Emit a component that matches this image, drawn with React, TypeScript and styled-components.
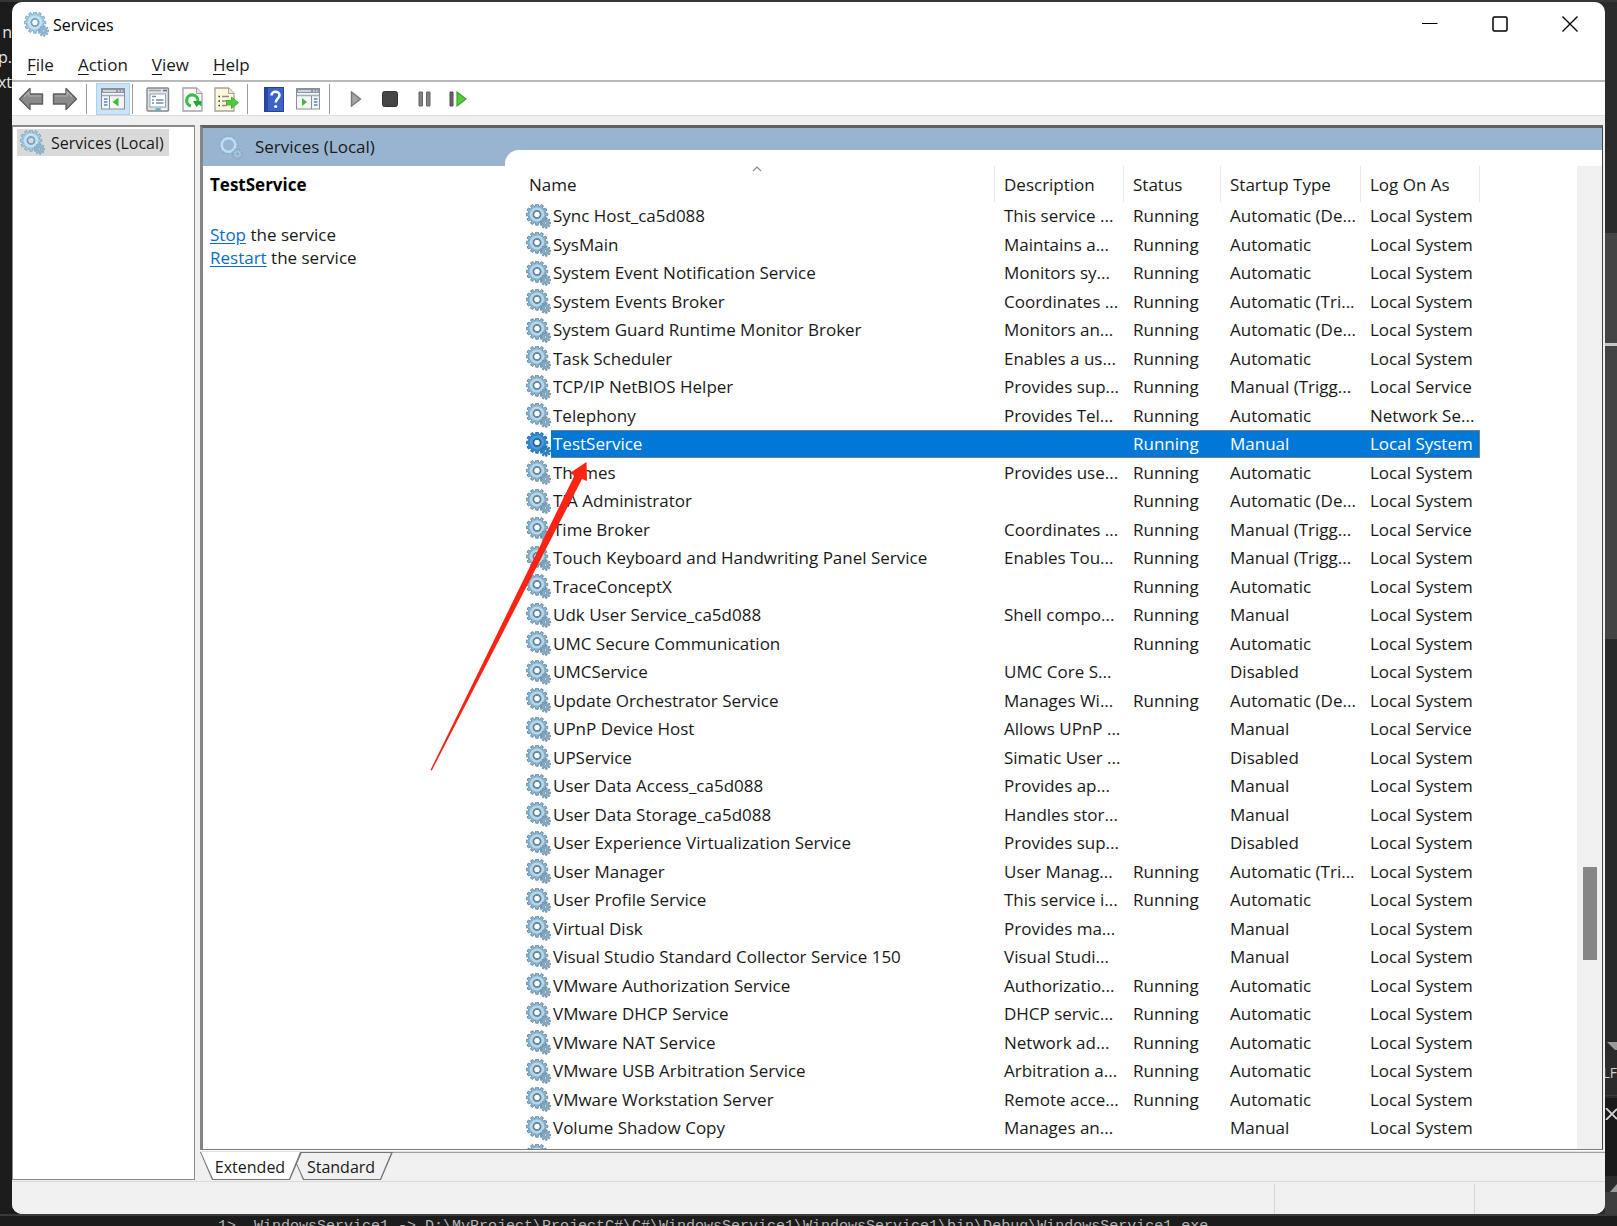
import React from "react";
import styled, { createGlobalStyle, css } from "styled-components";

const GlobalStyle = createGlobalStyle`
  *, *::before, *::after { box-sizing: border-box; }
  body {
    margin: 0;
    overflow: hidden;
    font-family: "Open Sans", "Noto Sans", sans-serif;
    font-size: 17px;
    line-height: 22px;
    color: #191919;
  }
  button { font: inherit; color: inherit; border: 0; padding: 0; margin: 0; background: none; }
`;

/* ---------- desktop behind the window ---------- */

const Desktop = styled.div`
  display: grid;
  grid-template: 2px minmax(0, 1fr) 12px / 12px minmax(0, 1fr) 12px;
  height: 100vh;
  background: linear-gradient(90deg, #1c1c1c 50%, #2b2b2b 50%);
`;

const TopEdge = styled.div`
  grid-column: 1 / -1;
  background: #363636;
`;

const LeftEdge = styled.div`
  display: flex;
  flex-direction: column;
  align-items: flex-end;
  padding-top: 18px;
  overflow: hidden;
  background: #1c1c1c;
  color: #e4e4e4;
  font-size: 16px;
  line-height: 25px;
  white-space: nowrap;
`;

const RightEdge = styled.div`
  display: flex;
  flex-direction: column;
  overflow: hidden;
  background: #2b2b2b;
  color: #d0d0d0;
`;

const EdgeBlock = styled.div<{ $h?: number; $bg: string }>`
  display: flex;
  align-items: flex-end;
  justify-content: center;
  ${(p) => (p.$h ? `flex: 0 0 ${p.$h}px;` : "flex: 1;")}
  background: ${(p) => p.$bg};
`;

const EdgeLabel = styled(EdgeBlock)`
  align-items: center;
  justify-content: flex-end;
  border-bottom: 1px solid #3c3c3c;
  font-size: 14px;
`;

const Console = styled.div`
  grid-column: 1 / -1;
  padding: 2px 0 0 218px;
  overflow: hidden;
  background: #1c1c1c;
  border-top: 2px solid #3a3a3a;
  color: #b4b4b4;
  font: 15px/18px "Liberation Mono", monospace;
  white-space: pre;
`;

/* ---------- window ---------- */

const Window = styled.main`
  position: relative;
  display: flex;
  flex-direction: column;
  overflow: hidden;
  border-radius: 10px;
  background: #fff;
`;

const TitleBar = styled.header`
  display: flex;
  align-items: center;
  height: 44px;
  flex: none;
  padding-left: 12px;
`;

const Title = styled.h1`
  flex: 1;
  margin: 0 0 0 4px;
  padding-top: 1px;
  font-size: 16px;
  font-weight: 400;
  color: #000;
`;

const CaptionButton = styled.button`
  display: grid;
  place-items: center;
  width: 70px;
  height: 100%;
`;

const MenuBar = styled.nav`
  display: flex;
  flex: none;
  height: 36px;
  padding: 4px 3px 0;
  border-bottom: 2px solid #b9b9b9;
`;

const MenuItem = styled.button`
  padding: 0 12px;

  &::first-letter { text-decoration: underline; text-underline-offset: 3px; }
`;

const Toolbar = styled.div`
  display: flex;
  align-items: center;
  flex: none;
  height: 34px;
  padding: 1px 0 0 2px;
  border-bottom: 1px solid #dcdcdc;
`;

const ToolButton = styled.button<{ $active?: boolean }>`
  display: grid;
  place-items: center;
  width: 34px;
  height: 32px;
  ${(p) =>
    p.$active &&
    css`
      background: #cce4f9;
      box-shadow: inset 0 0 0 1px #a9d1f3;
    `}
`;

const Separator = styled.i<{ $tight?: boolean }>`
  width: 1px;
  height: 30px;
  margin: 0 ${(p) => (p.$tight ? 8 : 9)}px 0 ${(p) => (p.$tight ? 2 : 4)}px;
  background: #9c9c9c;
`;

const Body = styled.div`
  display: flex;
  flex: 1;
  min-height: 0;
  gap: 5px;
  padding: 9px 0 1px;
  background: #f0f0f0;
`;

const TreePane = styled.aside`
  flex: 0 0 183px;
  padding: 2px 4px;
  border: solid #8a8a8a;
  border-width: 2px 1px 1px;
  background: #fff;
`;

const TreeItem = styled.button`
  display: flex;
  align-items: center;
  gap: 6px;
  height: 27px;
  padding: 0 5px 0 3px;
  background: #d9d9d9;
  font-size: 16px;
`;

const MainColumn = styled.div`
  display: flex;
  flex: 1;
  flex-direction: column;
  min-width: 0;
`;

const Pane = styled.section`
  display: flex;
  flex: 1;
  min-height: 0;
  margin-right: 2px;
  border: solid;
  border-width: 3px 1px 1px 3px;
  border-color: #606060 #444 #7c7c7c #858585;
  background: #fff;
`;

const Details = styled.div`
  flex: 0 0 302px;
`;

const Banner = styled.div`
  display: flex;
  align-items: center;
  gap: 12px;
  height: 38px;
  padding-left: 15px;
  background: #99b4d1;
`;

const DetailsBody = styled.div`
  padding: 8px 7px;

  h2 { margin: 0 0 27px; font-size: 17px; line-height: 22px; color: #000; }
  p { margin: 0; line-height: 23px; }
  a { color: #0a6cc8; text-underline-offset: 2px; }
`;

const ListBackdrop = styled.div`
  display: flex;
  flex: 1;
  min-width: 0;
  padding-top: 22px;
  background: linear-gradient(#99b4d1 38px, #fff 38px);
`;

const ListCard = styled.div`
  display: flex;
  flex: 1;
  min-width: 0;
  padding: 16px 0 0 15px;
  border-top-left-radius: 14px;
  background: #fff;
`;

const ListView = styled.div`
  flex: 1;
  min-width: 0;
  overflow: hidden;
`;

const Table = styled.table`
  width: 960px;
  table-layout: fixed;
  border-spacing: 0;
  border-collapse: separate;
`;

const Th = styled.th<{ $w: number }>`
  position: relative;
  width: ${(p) => p.$w}px;
  height: 36px;
  padding: 1px 0 0 9px;
  border-right: 1px solid #e8e8e8;
  font-weight: 400;
  text-align: left;
  white-space: nowrap;

  svg { position: absolute; top: 0; left: 50%; margin-left: -5px; }
`;

const Row = styled.tr<{ $selected: boolean }>`
  height: 29px;
  &:nth-child(odd) { height: 28px; }
  ${(p) =>
    p.$selected &&
    css`
      color: #fff;
      td:not(:first-child), td:first-child span {
        background: #0078d7;
        box-shadow: inset 0 1px #7c7f80, inset 0 -1px #7c7f80;
      }
      td:last-child { border-right: 1px solid #7c7f80; }
    `}
`;

const Td = styled.td`
  height: inherit;
  padding: 0 0 0 9px;
  overflow: hidden;
  white-space: nowrap;
`;

const NameTd = styled(Td)`
  padding: 0 0 0 6px;
`;

const NameCell = styled.div`
  display: flex;
  align-items: center;
  height: 28px;

  svg { flex: none; }
  span { flex: 1; padding-left: 2px; line-height: 28px; }
`;

const ScrollTrack = styled.div`
  flex: 0 0 25px;
  display: flex;
  flex-direction: column;
  align-items: center;
  background: #f0f0f0;
`;

const ScrollSpace = styled.div<{ $grow: number }>`
  flex: ${(p) => p.$grow} 0 0;
`;

const ScrollThumb = styled.div`
  flex: 93 0 0;
  width: 14px;
  background: #868686;
`;

const TabStrip = styled.div`
  display: flex;
  flex: none;
  height: 30px;
  border-top: 1px solid #fff;
  box-shadow: inset 0 1px #e0e0e0, inset 0 2px #a0a0a0;
`;

const Tab = styled.button<{ $active?: boolean }>`
  position: relative;
  z-index: ${(p) => (p.$active ? 2 : 1)};
  width: 102px;
  height: 28px;
  margin: 1px -11px 0 0;
  padding: 2px 2px 0 0;
  background: #757575;
  font-size: 16px;
  clip-path: polygon(0 0, 100% 0, calc(100% - 12px) 100%, 12px 100%);

  &::before {
    content: "";
    position: absolute;
    inset: 0;
    z-index: -1;
    background: ${(p) => (p.$active ? "#fff" : "#f0f0f0")};
    clip-path: polygon(
      1px ${(p) => (p.$active ? 0 : 1)}px,
      calc(100% - 2px) ${(p) => (p.$active ? 0 : 1)}px,
      calc(100% - 13px) calc(100% - 1px),
      13px calc(100% - 1px)
    );
  }
`;

const StatusBar = styled.footer`
  display: flex;
  flex: none;
  justify-content: flex-end;
  height: 33px;
  padding: 2px 3px 0 0;
  border-top: 1px solid #dadada;
  background: #f0f0f0;
`;

const StatusCell = styled.div<{ $w: number }>`
  width: ${(p) => p.$w}px;
  border-left: 1px solid #d8d8d8;
`;

const Pointer = styled.svg`
  position: absolute;
  left: 418px;
  top: 459px;
  pointer-events: none;
`;

/* ---------- drawings ---------- */

function gearPath(cx: number, cy: number, outer: number, inner: number, hole: number, teeth: number) {
  const pts: string[] = [];
  const step = (Math.PI * 2) / teeth;
  for (let i = 0; i < teeth; i++) {
    const a = i * step;
    [
      [inner, -0.3],
      [outer, -0.22],
      [outer, 0.22],
      [inner, 0.3],
    ].forEach(([r, k]) => {
      pts.push(`${(cx + r * Math.cos(a + k * step)).toFixed(2)} ${(cy + r * Math.sin(a + k * step)).toFixed(2)}`);
    });
  }
  return `M${pts.join("L")}ZM${cx - hole} ${cy}a${hole} ${hole} 0 1 0 ${hole * 2} 0a${hole} ${hole} 0 1 0 ${-hole * 2} 0Z`;
}

const BIG_GEAR = gearPath(11, 10.5, 10.8, 8.6, 3.2, 12);
const SMALL_GEAR = gearPath(19.5, 19, 5.4, 3.6, 1.1, 9);

const palettes = {
  normal: { edge: "#64869e", fill: "#8db6d1", ring: "#b5d8ec", inner: "#5b7b91", small: "#86abc4" },
  selected: { edge: "#1c6cb0", fill: "#2f87cd", ring: "#4c9bd8", inner: "#1a5d9c", small: "#2f7fc0" },
  light: { edge: "#7ba6c2", fill: "#a3cbe3", ring: "#c4e3f3", inner: "#7298b1", small: "#92b8d0" },
};

function Gears({ tone = "normal" }: { tone?: keyof typeof palettes }) {
  const c = palettes[tone];
  return (
    <svg width="25" height="25" viewBox="0 0 25 25" aria-hidden="true">
      <path d={BIG_GEAR} fill={c.fill} stroke={c.edge} strokeWidth="0.9" fillRule="evenodd" />
      <circle cx="11" cy="10.5" r="5.900" fill="none" stroke={c.ring} strokeWidth="2.400" />
      <circle cx="11" cy="10.5" r="3.700" fill="none" stroke={c.inner} strokeWidth="1.100" />
      <path d={SMALL_GEAR} fill={c.small} stroke={c.edge} strokeWidth="0.700" fillRule="evenodd" />
    </svg>
  );
}

function BannerGears() {
  return (
    <svg width="25" height="25" viewBox="0 0 25 25" aria-hidden="true">
      <circle cx="10.5" cy="10" r="9" fill="none" stroke="#8caccb" strokeWidth="2" strokeDasharray="2 2.7" />
      <circle cx="10.5" cy="10" r="6.8" fill="none" stroke="#b9dff0" strokeWidth="2.6" />
      <path d={SMALL_GEAR} fill="#a5c8de" stroke="#7c9fbe" strokeWidth="0.6" fillRule="evenodd" />
    </svg>
  );
}

function Arrow({ flip }: { flip?: boolean }) {
  return (
    <svg width="26" height="24" viewBox="0 0 26 24">
      <path
        d="M1.5 12 12 1.5V7H24.5V17H12V22.5Z"
        transform={flip ? "translate(26 0) scale(-1 1)" : undefined}
        fill="#8a8a8a"
        stroke="#5e5e5e"
        strokeWidth="1.4"
        strokeLinejoin="round"
      />
      <path d={flip ? "M3 9H15V5L20 10" : "M23 9H11V5L6 10"} fill="none" stroke="#b0b0b0" strokeWidth="1.2" />
    </svg>
  );
}

function ConsoleIcon({ mirrored }: { mirrored?: boolean }) {
  return (
    <svg width="24" height="22" viewBox="0 0 24 22">
      <rect x="0.5" y="0.5" width="23" height="20.5" fill="#f4f6f8" stroke="#8b8f94" />
      <rect x="1" y="1" width="22" height="4" fill="#8996a3" />
      <path d="M2 3H15M17 3H18.5M20 3H21.5" stroke="#e3e9ef" strokeWidth="1.4" />
      <path d="M1 7.5H23" stroke="#a6adb5" strokeWidth="1.4" />
      {mirrored ? (
        <>
          <path d="M15.5 8V21" stroke="#8b8f94" />
          <path d="M18 11H21.5M18 14H21.5M18 17H21.5" stroke="#4f87c4" strokeWidth="1.6" />
          <path d="M6 10V18L11 14Z" fill="#46b83a" />
        </>
      ) : (
        <>
          <path d="M8.5 8V21" stroke="#8b8f94" />
          <path d="M3 11H6.5M3 14H6.5M3 17H6.5" stroke="#4f87c4" strokeWidth="1.6" />
          <path d="M17.500 9.500V18.500L11.500 14Z" fill="#46b83a" />
        </>
      )}
    </svg>
  );
}

function PropertiesIcon() {
  return (
    <svg width="24" height="25" viewBox="0 0 24 25">
      <rect x="1" y="1" width="21.500" height="23" rx="1" fill="#dfe1e3" stroke="#84888c" strokeWidth="1.4" />
      <path d="M3 3.500H15" stroke="#9ba0a5" strokeWidth="1.4" />
      <path d="M17 3.500H21" stroke="#6a6e72" strokeWidth="1.6" />
      <rect x="4" y="7" width="15.500" height="13" fill="#fff" stroke="#8fa3b8" />
      <path d="M6 9.500H10M6 13H8M10 13H17.500M6 16H8M10 16H17.500" stroke="#6d8fb3" strokeWidth="1.3" />
      <rect x="9.500" y="21.300" width="5" height="1.800" fill="#3fb1e6" />
      <rect x="16" y="21.300" width="4.500" height="1.800" fill="#fff" />
    </svg>
  );
}

function PageShape({ tint }: { tint: string }) {
  return <path d="M1 1H14.500L20 6.500V24H1Z" fill={tint} stroke="#a3a3a3" strokeWidth="1.300" />;
}

function RefreshIcon() {
  return (
    <svg width="21" height="25" viewBox="0 0 21 25">
      <PageShape tint="#fafafa" />
      <path d="M14.500 1V6.500H20" fill="#e4e4e4" stroke="#a3a3a3" />
      <path d="M9 19A5.600 5.600 0 1 1 15.800 14" fill="none" stroke="#3cbd45" strokeWidth="3.200" />
      <path d="M11 14H19.500V19.500L17 17.500L14.500 20Z" fill="#27a636" />
    </svg>
  );
}

function ExportIcon() {
  return (
    <svg width="25" height="25" viewBox="0 0 25 25">
      <PageShape tint="#fbf8dc" />
      <path d="M14.500 1V6.500H20" fill="#efeacb" stroke="#a3a3a3" />
      <path d="M4.500 9.500H6M4.500 14H6M4.500 18.500H6" stroke="#333" strokeWidth="1.600" />
      <path d="M8 9.500H15M8 14H13M8 18.500H13" stroke="#8f8d7c" strokeWidth="1.400" />
      <path d="M12.500 13.500H17.500V10L24.500 15.800L17.500 21.500V18H12.500Z" fill="#4ccb38" stroke="#38ab2b" strokeWidth="0.800" />
    </svg>
  );
}

function HelpIcon() {
  return (
    <svg width="20" height="25" viewBox="0 0 20 25">
      <rect x="0.500" y="0.500" width="19" height="24" fill="#3c63c9" stroke="#2c3f93" />
      <path d="M1 1H4V24H1Z" fill="#2a46a4" />
      <path d="M7.500 8.500C7.500 3.500 15.500 3.500 15.500 8.300C15.500 11.500 11.700 11.800 11.700 15.500" fill="none" stroke="#fff" strokeWidth="2.500" />
      <circle cx="11.700" cy="19.500" r="1.600" fill="#fff" />
    </svg>
  );
}

function PlayIcon() {
  return (
    <svg width="12" height="16" viewBox="0 0 12 16">
      <path d="M1.500 1V15L10.500 8Z" fill="#a5a5a5" stroke="#777" strokeWidth="1.400" />
    </svg>
  );
}

function StopIcon() {
  return (
    <svg width="16" height="16" viewBox="0 0 16 16">
      <rect x="0.500" y="0.500" width="15" height="15" rx="2" fill="#454545" stroke="#333" />
    </svg>
  );
}

function PauseIcon() {
  return (
    <svg width="13" height="16" viewBox="0 0 13 16">
      <path d="M1 1H4.500V15H1ZM8.500 1H12V15H8.500Z" fill="#818181" stroke="#656565" />
    </svg>
  );
}

function RestartIcon() {
  return (
    <svg width="18" height="16" viewBox="0 0 18 16">
      <path d="M1 1H4V15H1Z" fill="#666" stroke="#4c4c4c" />
      <path d="M8 1V15L17 8Z" fill="#55c83e" stroke="#37a52a" strokeWidth="1.200" />
    </svg>
  );
}

/* ---------- data ---------- */

type Service = [name: string, description: string, status: string, startup: string, logOn: string];

const R = "Running";
const A = "Automatic";
const M = "Manual";
const D = "Disabled";
const DE = "Automatic (De...";
const TRI = "Automatic (Tri...";
const TRIG = "Manual (Trigg...";
const SYS = "Local System";
const SVC = "Local Service";

const services: Service[] = [
  ["Sync Host_ca5d088", "This service ...", R, DE, SYS],
  ["SysMain", "Maintains a...", R, A, SYS],
  ["System Event Notification Service", "Monitors sy...", R, A, SYS],
  ["System Events Broker", "Coordinates ...", R, TRI, SYS],
  ["System Guard Runtime Monitor Broker", "Monitors an...", R, DE, SYS],
  ["Task Scheduler", "Enables a us...", R, A, SYS],
  ["TCP/IP NetBIOS Helper", "Provides sup...", R, TRIG, SVC],
  ["Telephony", "Provides Tel...", R, A, "Network Se..."],
  ["TestService", "", R, M, SYS],
  ["Themes", "Provides use...", R, A, SYS],
  ["TIA Administrator", "", R, DE, SYS],
  ["Time Broker", "Coordinates ...", R, TRIG, SVC],
  ["Touch Keyboard and Handwriting Panel Service", "Enables Tou...", R, TRIG, SYS],
  ["TraceConceptX", "", R, A, SYS],
  ["Udk User Service_ca5d088", "Shell compo...", R, M, SYS],
  ["UMC Secure Communication", "", R, A, SYS],
  ["UMCService", "UMC Core S...", "", D, SYS],
  ["Update Orchestrator Service", "Manages Wi...", R, DE, SYS],
  ["UPnP Device Host", "Allows UPnP ...", "", M, SVC],
  ["UPService", "Simatic User ...", "", D, SYS],
  ["User Data Access_ca5d088", "Provides ap...", "", M, SYS],
  ["User Data Storage_ca5d088", "Handles stor...", "", M, SYS],
  ["User Experience Virtualization Service", "Provides sup...", "", D, SYS],
  ["User Manager", "User Manag...", R, TRI, SYS],
  ["User Profile Service", "This service i...", R, A, SYS],
  ["Virtual Disk", "Provides ma...", "", M, SYS],
  ["Visual Studio Standard Collector Service 150", "Visual Studi...", "", M, SYS],
  ["VMware Authorization Service", "Authorizatio...", R, A, SYS],
  ["VMware DHCP Service", "DHCP servic...", R, A, SYS],
  ["VMware NAT Service", "Network ad...", R, A, SYS],
  ["VMware USB Arbitration Service", "Arbitration a...", R, A, SYS],
  ["VMware Workstation Server", "Remote acce...", R, A, SYS],
  ["Volume Shadow Copy", "Manages an...", "", M, SYS],
  ["", "", "", "", ""],
];

const selectedName = "TestService";

export default function App() {
  return (
    <Desktop>
      <GlobalStyle />
      <TopEdge />
      <LeftEdge>
        <span>n</span>
        <span>p.</span>
        <span>ext</span>
      </LeftEdge>
      <Window>
        <TitleBar>
          <Gears tone="light" />
          <Title>Services</Title>
          <CaptionButton aria-label="Minimize">
            <svg width="16" height="16" viewBox="0 0 16 16">
              <path d="M0 7.500H15.500" stroke="#000" strokeWidth="1" />
            </svg>
          </CaptionButton>
          <CaptionButton aria-label="Maximize">
            <svg width="16" height="16" viewBox="0 0 16 16">
              <rect x="1" y="1" width="14" height="14" rx="1.500" fill="none" stroke="#000" strokeWidth="1.500" />
            </svg>
          </CaptionButton>
          <CaptionButton aria-label="Close">
            <svg width="16" height="16" viewBox="0 0 16 16">
              <path d="M0.500 0.500 15.500 15.500M15.500 0.500 0.500 15.500" stroke="#000" strokeWidth="1.400" />
            </svg>
          </CaptionButton>
        </TitleBar>
        <MenuBar>
          <MenuItem>File</MenuItem>
          <MenuItem>Action</MenuItem>
          <MenuItem>View</MenuItem>
          <MenuItem>Help</MenuItem>
        </MenuBar>
        <Toolbar role="toolbar">
          <ToolButton aria-label="Back"><Arrow /></ToolButton>
          <ToolButton aria-label="Forward"><Arrow flip /></ToolButton>
          <Separator />
          <ToolButton aria-label="Show console tree" $active><ConsoleIcon /></ToolButton>
          <Separator $tight />
          <ToolButton aria-label="Properties"><PropertiesIcon /></ToolButton>
          <ToolButton aria-label="Refresh"><RefreshIcon /></ToolButton>
          <ToolButton aria-label="Export list"><ExportIcon /></ToolButton>
          <Separator />
          <ToolButton aria-label="Help"><HelpIcon /></ToolButton>
          <ToolButton aria-label="Show action pane"><ConsoleIcon mirrored /></ToolButton>
          <Separator />
          <ToolButton aria-label="Start service"><PlayIcon /></ToolButton>
          <ToolButton aria-label="Stop service"><StopIcon /></ToolButton>
          <ToolButton aria-label="Pause service"><PauseIcon /></ToolButton>
          <ToolButton aria-label="Restart service"><RestartIcon /></ToolButton>
        </Toolbar>

        <Body>
          <TreePane>
            <TreeItem>
              <Gears tone="light" />
              Services (Local)
            </TreeItem>
          </TreePane>
          <MainColumn>
            <Pane>
              <Details>
                <Banner>
                  <BannerGears />
                  Services (Local)
                </Banner>
                <DetailsBody>
                  <h2>TestService</h2>
                  <p><a href="#stop">Stop</a> the service</p>
                  <p><a href="#restart">Restart</a> the service</p>
                </DetailsBody>
              </Details>
              <ListBackdrop>
                <ListCard>
                  <ListView>
                    <Table>
                      <thead>
                        <tr>
                          <Th $w={475}>
                            <svg width="10" height="6" viewBox="0 0 10 6">
                              <path d="M1 5 5 1 9 5" fill="none" stroke="#8a8a8a" strokeWidth="1.200" />
                            </svg>
                            Name
                          </Th>
                          <Th $w={129}>Description</Th>
                          <Th $w={97}>Status</Th>
                          <Th $w={140}>Startup Type</Th>
                          <Th $w={119}>Log On As</Th>
                        </tr>
                      </thead>
                      <tbody>
                        {services.map(([name, description, status, startup, logOn]) => {
                          const selected = name === selectedName;
                          return (
                            <Row key={name} $selected={selected}>
                              <NameTd>
                                <NameCell>
                                  <Gears tone={selected ? "selected" : "normal"} />
                                  <span>{name}</span>
                                </NameCell>
                              </NameTd>
                              <Td>{description}</Td>
                              <Td>{status}</Td>
                              <Td>{startup}</Td>
                              <Td>{logOn}</Td>
                            </Row>
                          );
                        })}
                      </tbody>
                    </Table>
                  </ListView>
                  <ScrollTrack>
                    <ScrollSpace $grow={702} />
                    <ScrollThumb />
                    <ScrollSpace $grow={189} />
                  </ScrollTrack>
                </ListCard>
              </ListBackdrop>
            </Pane>
            <TabStrip>
              <Tab $active>Extended</Tab>
              <Tab>Standard</Tab>
            </TabStrip>
          </MainColumn>
        </Body>
        <StatusBar>
          <StatusCell $w={200} />
          <StatusCell $w={128} />
        </StatusBar>
        <Pointer width="160" height="312" viewBox="0 0 160 312">
          <path d="M156.500 1 140 12 144.500 14.500 0.500 309L1.800 309.500 152 18 157 20Z" fill="#fb2314" />
        </Pointer>
      </Window>
      <RightEdge>
        <EdgeBlock $h={231} $bg="#2b2b2b" />
        <EdgeBlock $h={110} $bg="#444" />
        <EdgeBlock $h={3} $bg="#c8c8c8" />
        <EdgeBlock $h={293} $bg="#434343" />
        <EdgeBlock $h={411} $bg="#282828">
          <svg width="12" height="8" viewBox="0 0 12 8"><path d="M2 0H12V8H10Z" fill="#999" /></svg>
        </EdgeBlock>
        <EdgeLabel $h={46} $bg="#2b2b2b">LF</EdgeLabel>
        <EdgeBlock $h={2} $bg="#2b2b2b" />
        <EdgeBlock $h={22} $bg="#1a1a1a">
          <svg width="12" height="12" viewBox="0 0 12 12"><path d="M1 0 12 11M12 1 1 12" stroke="#d0d0d0" strokeWidth="1.800" /></svg>
        </EdgeBlock>
        <EdgeBlock $h={56} $bg="#1a1a1a" />
        <EdgeBlock $h={16} $bg="#2b2b2b">
          <svg width="12" height="8" viewBox="0 0 12 8"><path d="M5 8 12 0V8Z" fill="#999" /></svg>
        </EdgeBlock>
        <EdgeBlock $bg="#3e3e3e" />
      </RightEdge>
      <Console>
        {"1>  WindowsService1 -> D:\\MyProject\\ProjectC#\\C#\\WindowsService1\\WindowsService1\\bin\\Debug\\WindowsService1.exe"}
      </Console>
    </Desktop>
  );
}
